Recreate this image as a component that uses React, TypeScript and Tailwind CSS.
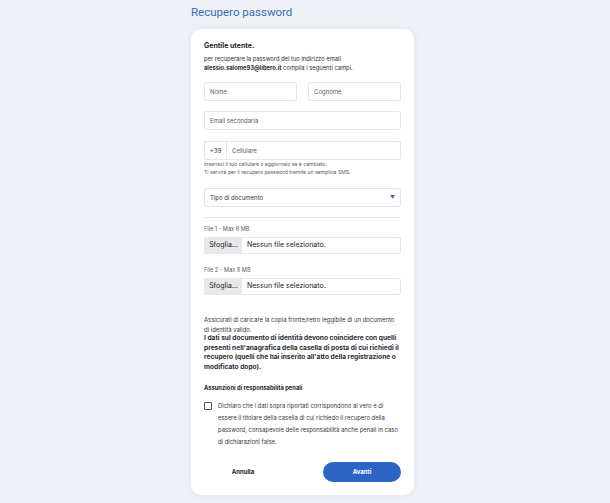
import { useState } from "react";

const font = { fontFamily: "Inter, 'Noto Sans', sans-serif" };

function TextField({ placeholder }: { placeholder: string }) {
  return (
    <div className="flex h-[19px] items-center rounded-[2px] border border-[#e3e6ea] bg-white px-[5px]">
      <span className="text-[6px] text-[#555b63]">{placeholder}</span>
    </div>
  );
}

function FileField({ label }: { label: string }) {
  return (
    <div>
      <p className="text-[5.6px] leading-[8px] text-[#555b63]">{label}</p>
      <div className="mt-[4px] flex h-[17px] items-center rounded-[2px] border border-[#e3e6ea] bg-white">
        <div className="flex h-full w-[37px] items-center justify-center bg-[#e9e9ed] text-[7px] text-[#222]">
          Sfoglia…
        </div>
        <span className="pl-[5px] text-[7px] text-[#222]">Nessun file selezionato.</span>
      </div>
    </div>
  );
}

export default function App() {
  const [checked, setChecked] = useState(false);

  return (
    <div className="min-h-[503px] w-[610px] bg-[#eef1f8] pl-[191px]" style={font}>
      <h1 className="pt-[4px] text-[11.5px] leading-[16px] text-[#3a6db6]" style={{ fontFamily: "Roboto, sans-serif" }}>
        Recupero password
      </h1>

      <div className="mt-[9px] w-[223px] rounded-[10px] bg-white px-[13px] pb-[13px] pt-[12px] shadow-[0_0_6px_rgba(30,50,90,0.08)]">
        <p className="text-[7px] font-bold leading-[10px] text-[#1d1f23]">Gentile utente.</p>
        <p className="mt-[3px] text-[5.8px] leading-[9px] text-[#2a2d31]">
          per recuperare la password del tuo indirizzo email
          <br />
          <span className="font-bold">alessio.salome93@libero.it</span> compila i seguenti campi.
        </p>

        <div className="mt-[10px] grid grid-cols-2 gap-[11px]">
          <TextField placeholder="Nome" />
          <TextField placeholder="Cognome" />
        </div>

        <div className="mt-[10px]">
          <TextField placeholder="Email secondaria" />
        </div>

        <div className="mt-[11px] flex h-[19px] items-center rounded-[2px] border border-[#e3e6ea] bg-white">
          <div className="flex h-full w-[22px] items-center justify-center border-r border-[#e3e6ea] text-[6px] text-[#333]">
            +39
          </div>
          <span className="pl-[5px] text-[6px] text-[#555b63]">Cellulare</span>
        </div>
        <p className="text-[5.1px] leading-[8px] text-[#555b63]">
          Inserisci il tuo cellulare o aggiornalo se è cambiato.
          <br />
          Ti servirà per il recupero password tramite un semplice SMS.
        </p>

        <div className="mt-[12px] flex h-[19px] items-center justify-between rounded-[2px] border border-[#e3e6ea] bg-white px-[5px]">
          <span className="text-[6px] text-[#333]">Tipo di documento</span>
          <span className="text-[5px] text-[#3a6db6]">▼</span>
        </div>

        <div className="mt-[10px] border-t border-[#e3e6ea]" />

        <div className="mt-[7px]">
          <FileField label="File 1 - Max 8 MB" />
        </div>
        <div className="mt-[12px]">
          <FileField label="File 2 - Max 8 MB" />
        </div>

        <div className="mt-[20px] text-[#34373c]">
          <p className="text-[5.95px] leading-[9.6px]">
            Assicurati di caricare la copia fronte/retro leggibile di un documento di identità valido.
          </p>
          <p className="text-[6.6px] font-bold leading-[9.6px] text-[#2a2d31]">
            I dati sul documento di identità devono coincidere con quelli presenti nell'anagrafica della casella di
            posta di cui richiedi il recupero (quelli che hai inserito all'atto della registrazione o modificato dopo).
          </p>
        </div>

        <p className="mt-[10px] text-[5.8px] font-bold leading-[10px] text-[#1d1f23]">
          Assunzioni di responsabilità penali
        </p>

        <label className="mt-[7px] flex cursor-pointer items-start gap-[6px]">
          <input
            type="checkbox"
            checked={checked}
            onChange={() => setChecked(!checked)}
            className="mt-[2px] h-[8px] w-[8px] shrink-0 appearance-none rounded-[1px] border border-[#555] bg-white checked:bg-[#2c63c4]"
          />
          <span className="text-[5.9px] leading-[12px] text-[#34373c]">
            Dichiaro che i dati sopra riportati corrispondono al vero e di essere il titolare della casella di cui
            richiedo il recupero della password, consapevole delle responsabilità anche penali in caso di
            dichiarazioni false.
          </span>
        </label>

        <div className="mt-[14px] flex justify-between">
          <button className="h-[20px] w-[78px] text-[6px] font-bold text-[#1d1f23]">Annulla</button>
          <button className="h-[20px] w-[78px] rounded-full bg-[#2c63c4] text-[6px] font-bold text-white">
            Avanti
          </button>
        </div>
      </div>
    </div>
  );
}
